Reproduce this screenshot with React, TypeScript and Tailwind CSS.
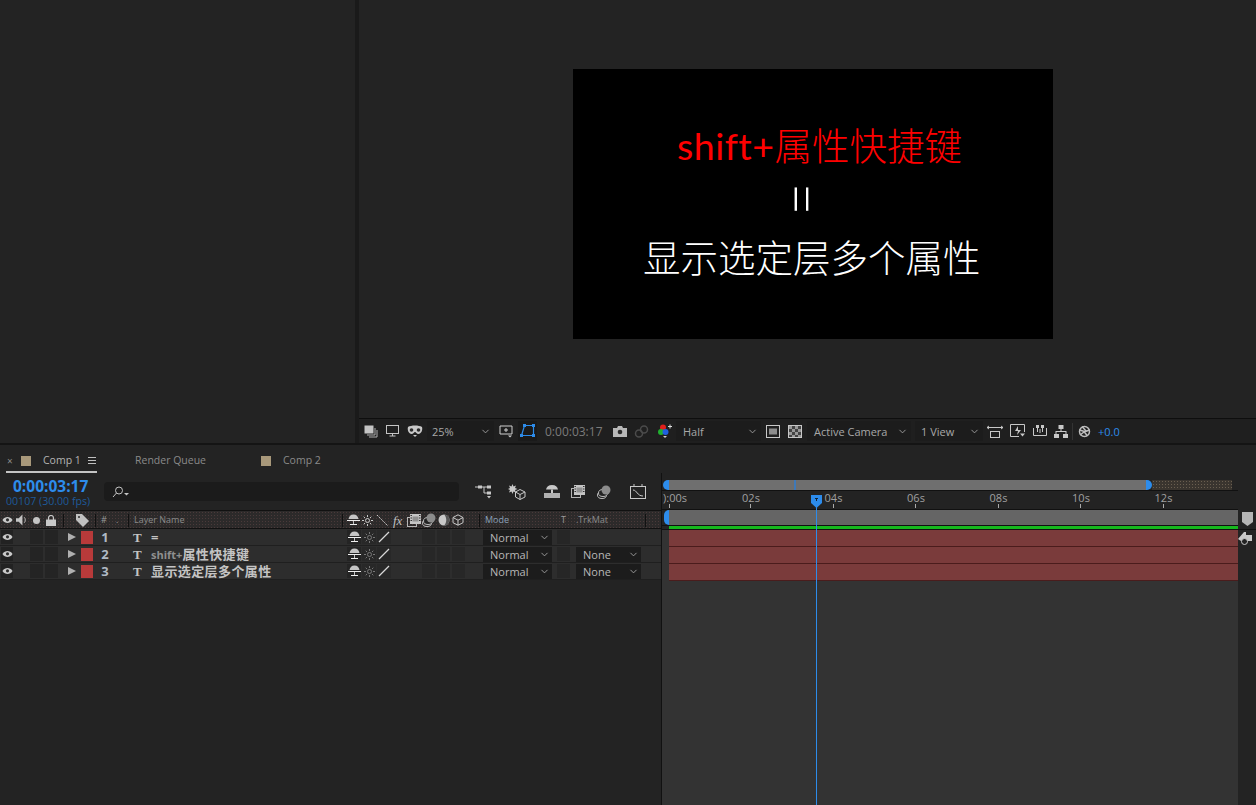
import React from 'react';
import { ChevronDown } from 'lucide-react';

const UI = 'font-["Open_Sans","Noto_Sans_CJK_SC",sans-serif]';

type IconProps = { className?: string };

// little line icons from the AE panels
const Eye: React.FC<IconProps> = ({ className }) => (
  <svg viewBox="0 0 12 8" className={className} width="11" height="8">
    <path d="M0.5 4C2 1.500 4 0.700 6 0.700S10 1.500 11.500 4C10 6.500 8 7.300 6 7.300S2 6.500 0.500 4Z" fill="#c9c9c9" />
    <circle cx="6" cy="3.800" r="1.700" fill="#2b2b2b" />
  </svg>
);

const Shy: React.FC<IconProps> = ({ className }) => (
  <svg viewBox="0 0 13 12" className={className} width="13" height="12">
    <path d="M6.500 0.500C3.500 0.500 2 2.500 1.500 5h10C11 2.500 9.500 0.500 6.500 0.500Z" fill="#c4c4c4" />
    <path d="M0 6h13v1H0ZM3 10h7v1H3Z" fill="#eeeeee" />
    <path d="M6 7h1v3H6Z" fill="#c0c0c0" />
  </svg>
);

const Sun: React.FC<IconProps> = ({ className }) => (
  <svg viewBox="0 0 11 11" className={className} width="11" height="11" stroke="currentColor" strokeWidth="1" fill="none">
    <circle cx="5.500" cy="5.500" r="2" />
    <path d="M5.500 0v2M5.500 9v2M0 5.500h2M9 5.500h2M1.700 1.700l1.400 1.400M7.900 7.900l1.400 1.400M1.700 9.300l1.400-1.400M7.900 3.100l1.400-1.400" />
  </svg>
);

const Slash: React.FC<IconProps> = ({ className }) => (
  <svg viewBox="0 0 12 12" className={className} width="12" height="12" stroke="#d8d8d8" strokeWidth="1.200" fill="none">
    <path d="M1 11 11 1" />
  </svg>
);

const Film: React.FC<IconProps> = ({ className }) => (
  <svg viewBox="0 0 14 13" className={className} width="14" height="13" fill="none">
    <rect x="0.500" y="3.500" width="9" height="9" stroke="#b5b5b5" />
    <rect x="3" y="0" width="11" height="10" fill="#c4c4c4" />
    <rect x="5.500" y="2.500" width="6" height="5" fill="#8f8f8f" />
    <path d="M3.500 1.500h1.500M3.500 4h1.500M3.500 6.500h1.500M12 1.500h1.500M12 4h1.500M12 6.500h1.500" stroke="#333" />
  </svg>
);

const Discs: React.FC<IconProps> = ({ className }) => (
  <svg viewBox="0 0 14 14" className={className} width="14" height="14" fill="none">
    <ellipse cx="5" cy="10" rx="4.500" ry="3.500" stroke="#bbb" />
    <ellipse cx="6" cy="8" rx="4.500" ry="3.500" stroke="#bbb" fill="#232323" />
    <circle cx="9" cy="5" r="4.500" fill="#8c8c8c" />
  </svg>
);

const Cube: React.FC<IconProps> = ({ className }) => (
  <svg viewBox="0 0 12 12" className={className} width="12" height="12" fill="none" stroke="#c8c8c8">
    <path d="M6 .8 11 3.500v5.200L6 11.200 1 8.700V3.500ZM1 3.500 6 6.200 11 3.500M6 6.200v5" />
  </svg>
);

const Sep: React.FC<IconProps> = ({ className = '' }) => <span className={`h-[13px] w-px bg-[#111] ${className}`} />;

const Select: React.FC<{ label: string; className: string; text?: string }> = ({ label, className, text = 'text-[#a8a8a8]' }) => (
  <div className={`flex items-center justify-between bg-[#1c1c1c] ${className}`}>
    <span className={`text-[11px] leading-none ${text}`}>{label}</span>
    <ChevronDown size={11} className="text-[#a0a0a0]" />
  </div>
);

const ViewerBar: React.FC = () => (
  <div className="flex h-[25px] items-center border-t border-[#0e0e0e] bg-[#1f1f1f]">
    <svg viewBox="0 0 14 13" width="14" height="13" className="ml-[5px]" fill="none">
      <rect x="0.500" y="0.500" width="9" height="8" fill="#c4c4c4" />
      <path d="M11 3v7H3M13 5v7H5" stroke="#b0b0b0" />
    </svg>
    <svg viewBox="0 0 13 12" width="13" height="12" className="ml-[8px]" fill="none" stroke="#c4c4c4">
      <rect x="0.500" y="0.500" width="12" height="8" />
      <path d="M3.500 11h6M6.500 9v2" />
    </svg>
    <svg viewBox="0 0 16 12" width="16" height="12" className="ml-[8px]">
      <path d="M1 2c3-2 11-2 14 0 1 3-1 7-3.500 7-2 0-2.500-2-3.500-2s-1.500 2-3.500 2C2 9 0 5 1 2Z" fill="#c8c8c8" />
      <circle cx="4.500" cy="5" r="1.800" fill="#2a2a2a" />
      <circle cx="11.500" cy="5" r="1.800" fill="#2a2a2a" />
      <path d="M6 10h4l-2 2Z" fill="#c8c8c8" />
    </svg>
    <Select label="25%" className="ml-[4px] h-[20px] w-[67px] pl-[5px] pr-[3px]" />
    <svg viewBox="0 0 14 14" width="14" height="14" className="ml-[5px]" fill="none" stroke="#d0d0d0">
      <path d="M1 2h12v8H1Z" />
      <path d="M7 4v4M5 6h4" />
      <path d="M9 11.500h4l-2 2Z" fill="#d0d0d0" stroke="none" />
    </svg>
    <div className="ml-[5px] flex h-[20px] w-[19px] items-center justify-center bg-[#1a1a1a]">
      <svg viewBox="0 0 15 14" width="15" height="14" fill="none" stroke="#2d8ceb" strokeWidth="1.200">
        <path d="M4.500 1.500h9v10H1.500Z" />
        <path d="M3 0h3v3H3ZM12 0h3v3h-3ZM0 10h3v3H0ZM12 10h3v3h-3Z" fill="#2d8ceb" stroke="none" />
      </svg>
    </div>
    <span className="ml-[8px] w-[60px] pt-[2px] text-[12px] leading-none text-[#7b7b7b]">0:00:03:17</span>
    <svg viewBox="0 0 14 11" width="14" height="11" className="ml-[8px]">
      <path d="M0 2h4l1-2h4l1 2h4v9H0Z" fill="#b8b8b8" />
      <circle cx="7" cy="6" r="2.300" fill="#2a2a2a" />
    </svg>
    <svg viewBox="0 0 15 13" width="15" height="13" className="ml-[7px]" fill="none" stroke="#4b4b4b" strokeWidth="1.500">
      <circle cx="5" cy="8.500" r="3.500" />
      <circle cx="10" cy="4.500" r="3.500" />
    </svg>
    <svg viewBox="0 0 14 15" width="14" height="15" className="ml-[9px]">
      <circle cx="5" cy="3.500" r="3" fill="#e0201c" />
      <circle cx="3" cy="8" r="3" fill="#20b030" />
      <circle cx="7.500" cy="8" r="3" fill="#2060e0" />
      <path d="M10 2.500h4M12 .5v4" stroke="#ddd" />
      <path d="M5 12h4l-2 2Z" fill="#ccc" />
    </svg>
    <Select label="Half" className="ml-[4px] h-[20px] w-[85px] pl-[7px] pr-[3px]" />
    <svg viewBox="0 0 14 13" width="14" height="13" className="ml-[5px]" fill="none">
      <rect x="0.500" y="0.500" width="13" height="12" stroke="#c8c8c8" />
      <rect x="3" y="3.500" width="8" height="6" fill="#8c8c8c" />
    </svg>
    <svg viewBox="0 0 14 13" width="14" height="13" className="ml-[8px]">
      <rect x="0.500" y="0.500" width="13" height="12" fill="#444" stroke="#c8c8c8" />
      <path d="M1 1h3v3H1ZM7 1h3v3H7ZM4 4h3v3H4ZM10 4h3v3h-3ZM1 7h3v3H1ZM7 7h3v3H7ZM4 10h3v2H4ZM10 10h3v2h-3Z" fill="#999" />
    </svg>
    <Select label="Active Camera" className="ml-[5px] h-[20px] w-[104px] pl-[7px] pr-[3px]" />
    <Select label="1 View" className="ml-[4px] h-[20px] w-[68px] pl-[6px] pr-[3px]" />
    <svg viewBox="0 0 16 13" width="16" height="13" className="ml-[4px]" fill="none" stroke="#c8c8c8">
      <path d="M0 2.500h16M0 2.500 2 1M0 2.500 2 4M16 2.500 14 1M16 2.500 14 4" />
      <rect x="3.500" y="6.500" width="9" height="6" />
    </svg>
    <svg viewBox="0 0 15 14" width="15" height="14" className="ml-[7px]" fill="none" stroke="#c8c8c8">
      <path d="M9 12.500H.5v-12h14V8" />
      <path d="M8 2 5 7h3l-1 4 4-5H8Z" fill="#c8c8c8" stroke="none" />
      <path d="M10 9.500h5l-2.500 3Z" fill="#c8c8c8" stroke="none" />
    </svg>
    <svg viewBox="0 0 14 12" width="14" height="12" className="ml-[8px]" fill="none" stroke="#c8c8c8">
      <path d="M.5 3v7.500h13V3M4.500 7V1M9.500 7V1M7 8V4" />
      <rect x="3.500" y="0.500" width="2" height="2" fill="#c8c8c8" />
      <rect x="8.500" y="0.500" width="2" height="2" fill="#c8c8c8" />
    </svg>
    <svg viewBox="0 0 14 13" width="14" height="13" className="ml-[7px]" fill="#c8c8c8">
      <rect x="4.500" y="0" width="5" height="4" />
      <rect x="0" y="9" width="5" height="4" />
      <rect x="9" y="9" width="5" height="4" />
      <path d="M6.500 4h1v2h5v3h-1V7h-9v2h-1V6h5Z" />
    </svg>
    <div className="ml-[4px] h-[17px] w-px bg-[#333]" />
    <svg viewBox="0 0 13 13" width="13" height="13" className="ml-[5px]" fill="none" stroke="#bdbdbd" strokeWidth="1.500">
      <circle cx="6.500" cy="6.500" r="5" />
      <path d="M4 1.500 8 6M11.500 5 6 7M9.500 11 6 6.500M2 10l4-3M1.500 5l5 1.500" />
    </svg>
    <span className="ml-[7px] text-[11px] leading-none text-[#2d8ceb]">+0.0</span>
  </div>
);

const TabBar: React.FC = () => (
  <div className="flex h-[28px] items-center text-[10.500px] text-[#8a8a8a]">
    <div className="ml-[6px] flex h-[28px] w-[91px] items-center border-b-2 border-[#c4c4c4] pt-[5px]">
      <span className="w-[15px] pl-[1px] text-[10px] leading-none text-[#8c8c8c]">×</span>
      <span className="h-[10px] w-[10px] bg-[#a8987a]" />
      <span className="ml-[12px] w-[45px] text-[#b4b4b4]">Comp 1</span>
      <span className="flex w-[8px] flex-col gap-[2px]">
        <span className="h-px bg-[#c0c0c0]" />
        <span className="h-px bg-[#c0c0c0]" />
        <span className="h-px bg-[#c0c0c0]" />
      </span>
    </div>
    <div className="flex items-center pt-[3px]">
      <span className="ml-[38px] w-[126px]">Render Queue</span>
      <span className="h-[10px] w-[10px] bg-[#a8987a]" />
      <span className="ml-[12px]">Comp 2</span>
    </div>
  </div>
);

const ToolRow: React.FC = () => (
  <div className="flex h-[37px] items-center">
    <div className="ml-[6px] flex w-[98px] flex-col pt-[3px]">
      <span className="ml-[7px] text-[15.500px] leading-[17px] font-bold text-[#2d8ceb]">0:00:03:17</span>
      <span className="text-[10.600px] leading-[13px] text-[#1e5a9a]">00107 (30.00 fps)</span>
    </div>
    <div className="flex h-[19px] w-[355px] items-center rounded-sm bg-[#1b1b1b] pl-[8px]">
      <svg viewBox="0 0 18 12" width="18" height="12" fill="none" stroke="#c4c4c4">
        <circle cx="7" cy="4.500" r="3.500" />
        <path d="M4.500 7 1 11" />
        <path d="M12 7h5l-2.500 2.500Z" fill="#c4c4c4" stroke="none" />
      </svg>
    </div>
    <svg viewBox="0 0 17 15" width="17" height="15" className="ml-[16px]" fill="none" stroke="#c8c8c8">
      <path d="M0 3h13M9 3v6h4" />
      <rect x="3" y="1.500" width="4" height="3" fill="#c8c8c8" stroke="none" />
      <rect x="12" y="1.500" width="4" height="3" fill="#c8c8c8" stroke="none" />
      <rect x="12" y="7.500" width="4" height="3" fill="#c8c8c8" stroke="none" />
      <path d="M12 12h4l-2 2.500Z" fill="#c8c8c8" stroke="none" />
    </svg>
    <svg viewBox="0 0 18 16" width="18" height="16" className="ml-[16px]" fill="none" stroke="#c8c8c8">
      <path d="M4.500 0 5.500 2.500 8 1.500 7 4l2.500 1L7 6l1 2.500L5.500 7.500 4.500 10l-1-2.500L1 8.500 2 6 0 5l2-1-1-2.500 2.500 1Z" fill="#c8c8c8" stroke="none" />
      <path d="M12 5.500 17 8v5l-5 2.500L7.500 13V8ZM7.500 8 12 10.500 17 8M12 10.500v5" />
    </svg>
    <svg viewBox="0 0 16 14" width="16" height="14" className="ml-[18px]" fill="#c8c8c8">
      <path d="M8 0c-3.500 0-5.500 2-6 4.500h12C13.500 2 11.500 0 8 0Z" />
      <path d="M7 4.500h2V8H7Z" />
      <path d="M0 8h16v5H0Z" fill="#b0b0b0" />
    </svg>
    <Film className="ml-[11px]" />
    <Discs className="ml-[12px]" />
    <svg viewBox="0 0 16 15" width="16" height="15" className="ml-[19px]" fill="none" stroke="#c8c8c8">
      <rect x="0.500" y="2.500" width="15" height="12" />
      <path d="M3 6c4 0 4 6 10 6M4 0v2M12 0v2" />
    </svg>
  </div>
);

const Head: React.FC = () => (
  <div className="flex h-[19px] items-center border-y border-[#111] bg-[#2c2a2a] bg-[radial-gradient(#4a3a3a_0.6px,transparent_0.6px)] bg-[length:3px_3px] pt-[1px] text-[9px] text-[#8a8a8a]">
    <Eye className="ml-[2px]" />
    <svg viewBox="0 0 12 12" width="11" height="12" className="ml-[3px]">
      <path d="M0 4h3l4-4v12L3 8H0Z" fill="#c4c4c4" />
      <path d="M9 3c1.500 2 1.500 4 0 6" stroke="#c4c4c4" fill="none" />
    </svg>
    <span className="ml-[6px] h-[7px] w-[7px] rounded-full bg-[#c4c4c4]" />
    <svg viewBox="0 0 10 11" width="10" height="11" className="ml-[6px]">
      <rect x="0" y="4.500" width="10" height="6.500" fill="#c8c8c8" />
      <path d="M2.500 5V3a2.500 2.500 0 0 1 5 0v2" stroke="#c8c8c8" fill="none" strokeWidth="1.200" />
    </svg>
    <Sep className="ml-[7px]" />
    <svg viewBox="0 0 13 13" width="13" height="13" className="ml-[12px]">
      <path d="M0 0h6l7 7-6 6-7-7Z" fill="#c0c0c0" />
      <circle cx="3" cy="3" r="1" fill="#2a2a2a" />
    </svg>
    <Sep className="ml-[6px]" />
    <span className="ml-[5px] w-[15px] text-[#9a9a9a]">#</span>
    <span className="w-[12px] text-[#9a9a9a]">.</span>
    <Sep />
    <span className="ml-[5px] w-[208px]">Layer Name</span>
    <Sep />
    <Shy className="ml-[4px]" />
    <Sun className="ml-[2px] text-[#c8c8c8]" />
    <svg viewBox="0 0 11 11" width="11" height="11" className="ml-[4px]" stroke="#c8c8c8" strokeDasharray="2 1">
      <path d="M0 0l11 11" />
    </svg>
    <span className="ml-[5px] w-[11px] font-['Liberation_Serif',serif] text-[13px] leading-none text-[#c0c0c0] italic">fx</span>
    <Film className="ml-[3px]" />
    <Discs className="ml-[1px]" />
    <svg viewBox="0 0 12 12" width="12" height="12" className="ml-[2px]">
      <circle cx="6" cy="6" r="5.500" fill="#c8c8c8" />
      <path d="M6 .5a5.500 5.500 0 0 1 0 11C9 9 9 3 6 .5Z" fill="#555" />
    </svg>
    <Cube className="ml-[2px]" />
    <Sep className="ml-[15px]" />
    <span className="ml-[5px] w-[76px] text-[#8aa0b8]">Mode</span>
    <span className="w-[15px] text-[#9a9a9a]">T</span>
    <span className="w-[69px]">.TrkMat</span>
    <Sep />
  </div>
);

const Row: React.FC<{ n: number; name: React.ReactNode; matte: boolean }> = ({ n, name, matte }) => (
  <div className="flex h-[17px] items-center border-b border-[#1f1f1f] bg-[#2d2d2d]">
    <div className="ml-[1px] flex h-[14px] w-[12px] items-center justify-center bg-[#222]">
      <Eye />
    </div>
    <span className="ml-[17px] h-[14px] w-[13px] bg-[#242424]" />
    <span className="ml-[2px] h-[14px] w-[13px] bg-[#242424]" />
    <svg viewBox="0 0 8 8" width="8" height="8" className="ml-[10px]">
      <path d="M0 0 8 4 0 8Z" fill="#b0b0b0" />
    </svg>
    <span className="ml-[5px] h-[13px] w-[12px] bg-[#b83a3a]" />
    <span className="w-[24px] text-center text-[13px] leading-none font-bold text-[#b0bac4]">{n}</span>
    <span className="ml-[16px] w-[18px] font-['Liberation_Serif',serif] text-[13px] leading-none font-bold text-[#c4c4c4]">T</span>
    <span className="w-[196px] text-[13px] leading-[16px] font-bold tracking-[0.4px] whitespace-nowrap text-[#c4c4c4]">{name}</span>
    <div className="flex h-[14px] w-[14px] items-center justify-center bg-[#242424]">
      <Shy />
    </div>
    <div className="ml-[1px] flex h-[14px] w-[14px] items-center justify-center bg-[#282828]">
      <Sun className="text-[#777]" />
    </div>
    <div className="ml-[1px] flex h-[14px] w-[14px] items-center justify-center bg-[#282828]">
      <Slash />
    </div>
    <span className="ml-[31px] h-[14px] w-[13px] bg-[#272727]" />
    <span className="ml-[2px] h-[14px] w-[13px] bg-[#272727]" />
    <span className="ml-[2px] h-[14px] w-[13px] bg-[#272727]" />
    <Select label="Normal" className="ml-[18px] h-[15px] w-[69px] pl-[7px] pr-[2px]" text="text-[#b8b8b8]" />
    <span className="ml-[5px] h-[14px] w-[13px] bg-[#262626]" />
    {matte && <Select label="None" className="ml-[6px] h-[15px] w-[65px] pl-[7px] pr-[2px]" text="text-[#b8b8b8]" />}
  </div>
);

const LeftPane: React.FC = () => (
  <div className="flex w-[662px] shrink-0 flex-col border-r border-[#111]">
    <ToolRow />
    <Head />
    <Row n={1} name="=" matte={false} />
    <Row
      n={2}
      name={
        <>
          <span className="text-[11px] tracking-normal text-[#8f8f8f]">shift+</span>
          属性快捷键
        </>
      }
      matte
    />
    <Row n={3} name="显示选定层多个属性" matte />
  </div>
);

const ticks = ['02s', '04s', '06s', '08s', '10s', '12s'];

const Timeline: React.FC = () => (
  <div className="flex min-w-0 flex-1 flex-col">
    {/* navigator */}
    <div className="mt-[7px] mr-[6px] ml-[1px] flex h-[10px] items-stretch">
      <span className="h-[10px] w-[6px] rounded-l-full bg-[#2d8ceb]" />
      <div className="relative flex-1 bg-[#6f6f6f]">
        <span className="absolute top-0 left-[125px] h-[10px] w-[2px] bg-[#3f79b8]" />
      </div>
      <span className="h-[10px] w-[6px] rounded-r-full bg-[#2d8ceb]" />
      <div className="w-[80px] bg-[#3a352f] bg-[radial-gradient(#6a5f50_0.7px,transparent_0.7px)] bg-[length:3px_3px]" />
    </div>
    {/* ruler */}
    <div className="flex h-[20px] border-t border-b border-[#111] pl-[1px] text-[11px] leading-none text-[#a0a0a0]">
      <div className="flex h-full w-[76px] flex-col pt-[1px]">
        <span className="h-[12px]">):00s</span>
        <span className="ml-[6px] h-[4px] w-px bg-[#aaa]" />
      </div>
      {ticks.map(t => (
        <div key={t} className="flex h-full w-[82.500px] flex-col pt-[1px]">
          <span className="h-[12px] w-[24px] text-center">{t}</span>
          <span className="ml-[11px] h-[4px] w-px bg-[#aaa]" />
        </div>
      ))}
    </div>
    {/* work area */}
    <div className="flex h-[15px]">
      <span className="ml-[2px] h-[15px] w-[5px] rounded-l-md bg-[#2d8ceb]" />
      <div className="flex-1 bg-[#656565]" />
    </div>
    <div className="h-[1px] bg-[#111]" />
    <div className="ml-[7px] h-[3px] bg-[#16b81e]" />
    <div className="h-[1px] bg-[#111]" />
    <div className="flex flex-1 flex-col bg-[#333333] pl-[7px]">
      {[0, 1, 2].map(i => (
        <div key={i} className="h-[17px] border-b border-[#4a1c1c] bg-[#7a3b3b]" />
      ))}
    </div>
  </div>
);

const SideStrip: React.FC = () => (
  <div className="flex w-[18px] shrink-0 flex-col items-center pt-[39px]">
    <svg viewBox="0 0 11 14" width="11" height="14">
      <path d="M0 0h11v10l-5.500 4L0 10Z" fill="#b5b5b5" />
    </svg>
    <div className="mt-[3px] h-px w-full bg-[#111]" />
    <svg viewBox="0 0 14 13" width="14" height="13" className="mt-[2px] mr-[4px]">
      <path d="M0 7 6 0h2v3h6v6H8L3 9Z" fill="#c8c8c8" />
      <circle cx="6.500" cy="9.500" r="3" fill="#232323" stroke="#c8c8c8" />
    </svg>
  </div>
);

export default function App() {
  return (
    <div className={`flex h-[805px] w-[1256px] flex-col overflow-hidden bg-[#232323] ${UI}`}>
      <div className="flex h-[445px] border-b-2 border-[#141414]">
        <div className="w-[355px]" />
        <div className="w-[4px] bg-[#1a1a1a]" />
        <div className="flex flex-1 flex-col">
          <div className="flex-1 pt-[69px] pl-[214px]">
            <div className="flex h-[270px] w-[480px] flex-col bg-black font-['Noto_Sans_CJK_SC',sans-serif] font-light">
              <p className="mt-[50px] ml-[104px] h-[50px] text-[37.500px] leading-[50px] whitespace-nowrap text-[#ff0000]">
                <span className="font-['Lato',sans-serif] font-normal tracking-[0.5px]">shift+</span>属性快捷键
              </p>
              <p className="mt-[2px] ml-[207px] h-[56px] w-[50px] rotate-90 text-center text-[50px] leading-[56px] text-white">=</p>
              <p className="mt-[4px] ml-[70px] h-[50px] text-[37.500px] leading-[50px] whitespace-nowrap text-white">显示选定层多个属性</p>
            </div>
          </div>
          <ViewerBar />
        </div>
      </div>
      <TabBar />
      <div className="relative flex flex-1">
        <LeftPane />
        <Timeline />
        <SideStrip />
        {/* playhead sits over the ruler and layer bars */}
        <svg viewBox="0 0 11 13" width="11" height="13" className="absolute top-[22px] left-[811px]">
          <path d="M0 0h11v8l-5.500 5L0 8Z" fill="#2d8ceb" />
          <path d="M4 3h3v1H6v2H5V4H4Z" fill="#123" />
        </svg>
        <div className="absolute top-[34px] bottom-0 left-[816px] w-px bg-[#2d8ceb]" />
      </div>
    </div>
  );
}
